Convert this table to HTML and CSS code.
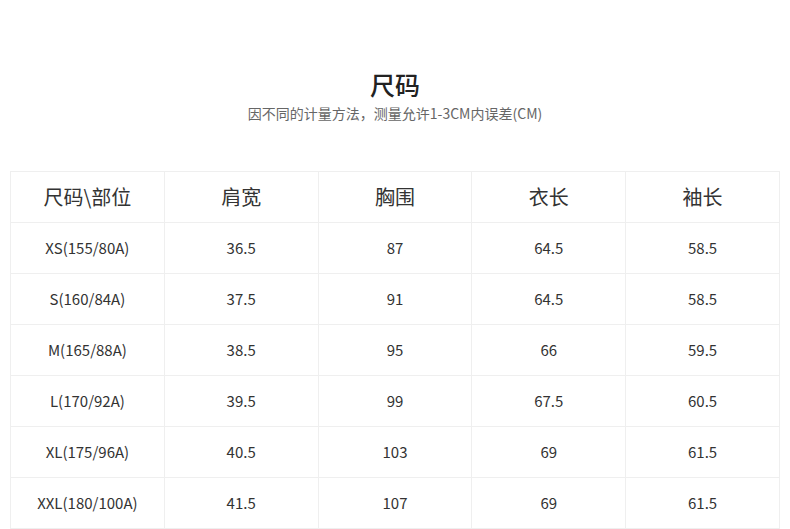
FILE: index.html
```html
<!DOCTYPE html>
<html lang="zh-CN">
<head>
<meta charset="utf-8">
<title>尺码</title>
<link rel="stylesheet" href="styles.css">
</head>
<body>
<div class="page">
  <header class="head">
    <h1 class="title">尺码</h1>
    <p class="subtitle">因不同的计量方法，测量允许1-3CM内误差(CM)</p>
  </header>
  <table class="size-table">
    <thead>
      <tr><th>尺码\部位</th><th>肩宽</th><th>胸围</th><th>衣长</th><th>袖长</th></tr>
    </thead>
    <tbody>
      <tr><td>XS(155/80A)</td><td>36.5</td><td>87</td><td>64.5</td><td>58.5</td></tr>
      <tr><td>S(160/84A)</td><td>37.5</td><td>91</td><td>64.5</td><td>58.5</td></tr>
      <tr><td>M(165/88A)</td><td>38.5</td><td>95</td><td>66</td><td>59.5</td></tr>
      <tr><td>L(170/92A)</td><td>39.5</td><td>99</td><td>67.5</td><td>60.5</td></tr>
      <tr><td>XL(175/96A)</td><td>40.5</td><td>103</td><td>69</td><td>61.5</td></tr>
      <tr><td>XXL(180/100A)</td><td>41.5</td><td>107</td><td>69</td><td>61.5</td></tr>
    </tbody>
  </table>
</div>
</body>
</html>
```

FILE: styles.css
```css
html, body {
  margin: 0;
  padding: 0;
  background: #ffffff;
}
body {
  font-family: "Noto Sans CJK SC", "Noto Sans", sans-serif;
  color: #333333;
}
.page {
  width: 790px;
  padding-top: 69px;
}
.head {
  text-align: center;
}
.title {
  margin: 0;
  font-size: 25px;
  line-height: 30px;
  font-weight: 500;
  color: #222222;
}
.subtitle {
  margin: 4px 0 0;
  font-size: 14px;
  line-height: 20px;
  color: #666666;
}
.size-table {
  margin: 48px 0 0 10px;
  width: 770px;
  border-collapse: collapse;
  table-layout: fixed;
}
.size-table th,
.size-table td {
  border: 1px solid #efefef;
  height: 49px;
  padding: 0 0 1px;
  text-align: center;
  vertical-align: middle;
}
.size-table th {
  font-size: 20px;
  font-weight: 400;
  color: #333333;
}
.size-table td {
  font-size: 15px;
  color: #333333;
}
```
